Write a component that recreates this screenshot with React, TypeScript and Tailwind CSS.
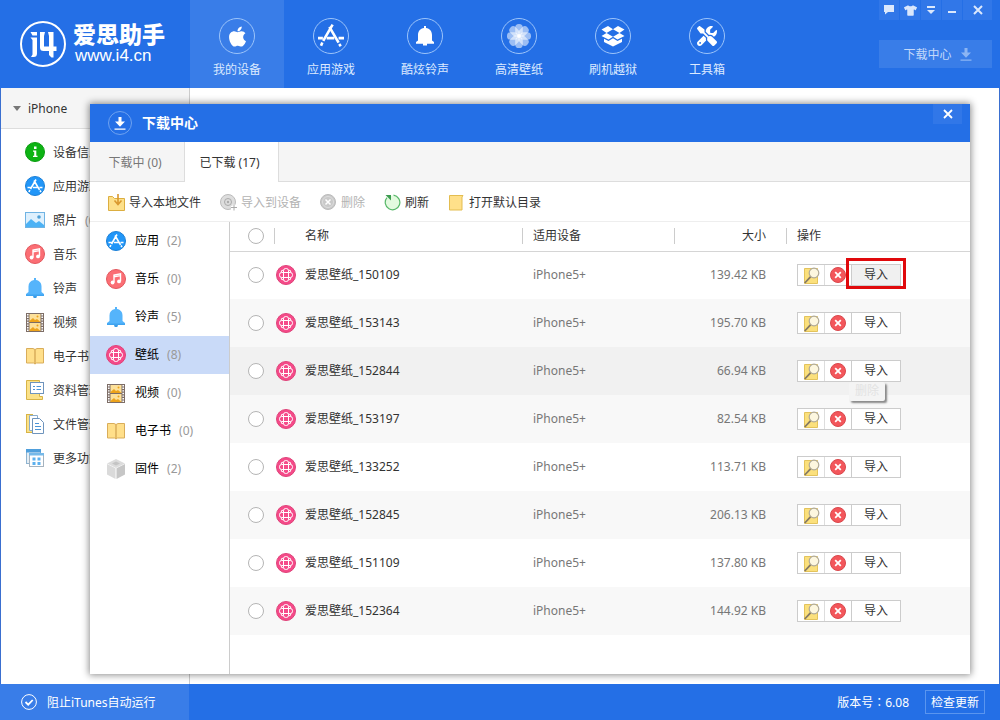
import { useState } from 'react';
import type { ReactNode } from 'react';
import { FaApple, FaTshirt } from 'react-icons/fa';
import { FaScrewdriverWrench } from 'react-icons/fa6';

const AppStoreGlyph = ({ size = 26 }: { size?: number }) => (
  <svg width={size} height={size} viewBox="0 0 24 24" fill="none" stroke="currentColor" strokeWidth="2.4">
    <path d="M13.5 1.5 4.8 16.5M4 18l-1.2 3" />
    <path d="M10.5 3.5 19 18.2M19.6 19.4l1.4 2.1" />
    <path d="M0 14h4.5M8 14h7M19 14h5" />
  </svg>
);

const BellGlyph = () => (
  <svg width="18" height="20" viewBox="0 0 18 20" fill="currentColor">
    <path d="M8 0h2v2c3.8.6 6 3.200 6 7v5.500L18 16v1.800h-7V19.500H7v-1.700H0V16l2-1.500V9c0-3.800 2.200-6.400 6-7z" />
  </svg>
);

const FlowerGlyph = () => (
  <svg width="24" height="24" viewBox="-12 -12 24 24" fill="white">
    {[0, 45, 90, 135, 180, 225, 270, 315].map((deg) => (
      <rect key={deg} x="-3.800" y="-12" width="7.600" height="11" rx="3.600" opacity="0.55" transform={`rotate(${deg})`} />
    ))}
    <circle r="2" />
  </svg>
);

const BoxGlyph = () => (
  <svg width="24" height="22" viewBox="0 0 24 22" fill="currentColor">
    <path d="M7 1l5 3.200L5.500 8 .5 4.500zM17 1l-5 3.200L18.500 8l5-3.500z" />
    <path d="M5.500 8L12 11.800 7.500 14.500.5 11zM18.500 8L12 11.800l4.500 2.700 7-3.500z" />
    <path d="M3 13.800l4.500 2.200L12 13.200l4.500 2.800 4.500-2.200V17l-9 4.500L3 17z" />
  </svg>
);

const InfoIcon = () => (
  <svg width="20" height="20" viewBox="0 0 20 20">
    <circle cx="10" cy="10" r="9.500" fill="#0db314" stroke="#0a9c10" />
    <path d="M9 4.500h2.500V7H9zM8 8.500h3.300v5.300h1.200V15H8v-1.200h1.200V9.700H8z" fill="#fff" />
  </svg>
);

const AppIcon = () => (
  <svg width="20" height="20" viewBox="0 0 20 20" fill="none">
    <circle cx="10" cy="10" r="9.500" fill="#2196f8" stroke="#1b7fd6" />
    <g stroke="#fff" strokeWidth="1.600">
      <path d="M11 3.500 5.500 13M4.800 14l-.8 2M9 4.500l5.500 9.300M15 14.500l1 1.500M2.500 11.500H6M8 11.500h4.500M14.500 11.500h3" />
    </g>
  </svg>
);

const PhotoIcon = () => (
  <svg width="20" height="16" viewBox="0 0 20 16">
    <rect x=".5" y=".5" width="19" height="15" fill="#def0fd" stroke="#6fb3e3" />
    <path d="M1 12l5-5 5 4 3-2 5 4v2H1z" fill="#4cb2f5" />
    <circle cx="14" cy="5" r="1.800" fill="#4d9fd6" />
  </svg>
);

const MusicIcon = () => (
  <svg width="20" height="20" viewBox="0 0 20 20">
    <circle cx="10" cy="10" r="9.500" fill="#fb6e74" stroke="#e2575d" />
    <path d="M8 13.500V6l6.500-1.200v7.500M8 7.800l6.500-1.200" fill="none" stroke="#fff" strokeWidth="1.400" />
    <circle cx="6.600" cy="13.500" r="1.900" fill="#fff" />
    <circle cx="13" cy="12.400" r="1.900" fill="#fff" />
  </svg>
);

const BellIcon = () => (
  <svg width="20" height="20" viewBox="0 0 20 20">
    <path d="M9 0h2v2c3.500.6 5.500 3 5.500 6.500V14l2.500 2v2H1v-2l2.500-2V8.500C3.500 5 5.500 2.600 9 2z" fill="#55b4fb" />
    <path d="M8 18h4l-.7 2H8.700z" fill="#3a9be6" />
    <path d="M1 16.500h18V18H1z" fill="#3fa4f0" />
  </svg>
);

const VideoIcon = () => (
  <svg width="18" height="19" viewBox="0 0 18 19">
    <rect width="18" height="19" fill="#7d6d66" />
    <path d="M1.800 1v17M16.200 1v17" stroke="#fff" strokeWidth="1.600" strokeDasharray="1.400 1.200" />
    <rect x="3.500" y="1" width="11" height="8" fill="#fde19a" />
    <rect x="3.500" y="10" width="11" height="8" fill="#fde19a" />
    <path d="M3.500 8l3.500-3 2 2 2-1 3.500 3h-11zM3.500 17l3.500-3 2 2 2-1 3.500 3h-11z" fill="#eda31b" />
    <circle cx="11.500" cy="3.500" r="1" fill="#eda31b" />
    <circle cx="11.500" cy="12.500" r="1" fill="#eda31b" />
  </svg>
);

const BookIcon = () => (
  <svg width="18" height="18" viewBox="0 0 18 18" fill="#ffdf8a" stroke="#d9ad5a">
    <path d="M.5 1.500H7L9 2.500V17l-1.500-1h-7zM17.500 1.500H11L9 2.500V17l1.500-1h7z" />
  </svg>
);

const DataIcon = () => (
  <svg width="18" height="20" viewBox="0 0 18 20">
    <path d="M.5.5h13v16h3v3H.5z" fill="#fbe188" stroke="#d8b446" />
    <rect x="4.500" y="2.500" width="13" height="11" fill="#fff" stroke="#6e94bd" />
    <path d="M7 6.500h2M7 9.500h2M10.500 6.500H15M10.500 9.500H15" stroke="#4b93d6" />
  </svg>
);

const FilesIcon = () => (
  <svg width="18" height="20" viewBox="0 0 18 20">
    <rect x=".5" y=".5" width="6" height="18" fill="#fbe188" stroke="#d8b446" />
    <path d="M3.500 1.500h8v15h-8z" fill="#fff" stroke="#8badcc" />
    <path d="M6.500 4.500h7l4 4v11h-11z" fill="#fff" stroke="#6e94bd" />
    <path d="M9 9.500h4M9 12.500h6M9 15.500h6" stroke="#4b93d6" />
  </svg>
);

const MoreIcon = () => (
  <svg width="18" height="18" viewBox="0 0 18 18">
    <rect x=".5" y=".5" width="14" height="14" fill="#e5eef5" stroke="#8fb4d0" />
    <path d="M0 0h15v3.500H0z" fill="#4f9fdc" />
    <rect x="3.500" y="4.500" width="14" height="13" fill="#fff" stroke="#a5b3bf" />
    <path d="M3 4h15v2.500H3z" fill="#75b9e9" />
    <path d="M6.500 8.500h3v3h-3zM11.500 8.500h3v3h-3zM6.500 13h3v3h-3zM11.500 13h3v3h-3z" fill="#5cb0ee" />
  </svg>
);

const WallpaperIcon = () => (
  <svg width="20" height="20" viewBox="0 0 20 20">
    <circle cx="10" cy="10" r="9.500" fill="#f54a89" stroke="#de4379" />
    <g fill="none" stroke="#fff" strokeWidth="1">
      <rect x="7.500" y="3.500" width="5" height="13" rx="2.200" />
      <rect x="3.500" y="7.500" width="13" height="5" rx="2.200" />
      <path d="M7.500 5.200Q4.800 4.800 5.200 7.500M12.500 5.200q2.700-.4 2.300 2.300M7.500 14.800q-2.700.4-2.300-2.300M12.500 14.800q2.700.4 2.300-2.300" />
    </g>
  </svg>
);

const FirmwareIcon = () => (
  <svg width="18" height="20" viewBox="0 0 18 20">
    <path d="M9 0l9 4.500L9 9 0 4.500z" fill="#dcdcdc" />
    <path d="M0 5l8.500 4.300V20L0 15.500z" fill="#dadada" />
    <path d="M18 5L9.500 9.300V20l8.500-4.500z" fill="#c6c6c6" />
    <path d="M9 2.500l4 2-4 2-4-2z" fill="#c4c4c4" />
  </svg>
);

const DownloadGlyph = () => (
  <svg width="12" height="13" viewBox="0 0 12 13" fill="currentColor">
    <path d="M4.500 0h3v4.500H11L6 9.800 1 4.500h3.500zM.5 11.500h11v1.300H.5z" />
  </svg>
);

const navItems = [
  { label: '我的设备', icon: <FaApple size={23} /> },
  { label: '应用游戏', icon: <AppStoreGlyph /> },
  { label: '酷炫铃声', icon: <BellGlyph /> },
  { label: '高清壁纸', icon: <FlowerGlyph /> },
  { label: '刷机越狱', icon: <BoxGlyph /> },
  { label: '工具箱', icon: <FaScrewdriverWrench size={20} /> },
];

const deviceItems = [
  { label: '设备信息', icon: <InfoIcon /> },
  { label: '应用游戏', icon: <AppIcon /> },
  { label: '照片', count: 0, icon: <PhotoIcon /> },
  { label: '音乐', icon: <MusicIcon /> },
  { label: '铃声', icon: <BellIcon /> },
  { label: '视频', icon: <VideoIcon /> },
  { label: '电子书', icon: <BookIcon /> },
  { label: '资料管理', icon: <DataIcon /> },
  { label: '文件管理', icon: <FilesIcon /> },
  { label: '更多功能', icon: <MoreIcon /> },
];

const categories = [
  { label: '应用', count: 2, icon: <AppIcon /> },
  { label: '音乐', count: 0, icon: <MusicIcon /> },
  { label: '铃声', count: 5, icon: <BellIcon /> },
  { label: '壁纸', count: 8, icon: <WallpaperIcon /> },
  { label: '视频', count: 0, icon: <VideoIcon /> },
  { label: '电子书', count: 0, icon: <BookIcon /> },
  { label: '固件', count: 2, icon: <FirmwareIcon /> },
];

const files = [
  { name: '爱思壁纸_150109', size: '139.42 KB' },
  { name: '爱思壁纸_153143', size: '195.70 KB' },
  { name: '爱思壁纸_152844', size: '66.94 KB' },
  { name: '爱思壁纸_153197', size: '82.54 KB' },
  { name: '爱思壁纸_133252', size: '113.71 KB' },
  { name: '爱思壁纸_152845', size: '206.13 KB' },
  { name: '爱思壁纸_151109', size: '137.80 KB' },
  { name: '爱思壁纸_152364', size: '144.92 KB' },
];

function Header() {
  return (
    <header className="flex h-[88px] shrink-0 bg-[#246fe6] text-white">
      <div className="flex w-[190px] shrink-0 items-center gap-[7px] pl-5">
        <svg width="46" height="46" viewBox="0 0 46 46" fill="#fff">
          <circle cx="23" cy="23" r="22" fill="none" stroke="#fff" strokeWidth="2" />
          <path d="M10.500 11H17v3.500h-4.500zM10.500 16.500H17v16q0 3.500-3.500 3.500H11l1.500-2.500V19z" />
          <path d="M20 11h5l-1 4v10.500h5V15l-1-4h5.500v14.500h3V30h-3v6.500h-2L29 34v-4h-5.500Q20 30 20 26.500z" />
        </svg>
        <div>
          <div className="text-[23px] leading-6 font-black">爱思助手</div>
          <div className="pl-0.5 font-['Liberation_Sans',sans-serif] text-[17px] leading-5">www.i4.cn</div>
        </div>
      </div>
      <nav className="flex flex-1">
        {navItems.map((item, i) => (
          <a
            key={item.label}
            href="#"
            className={`flex w-[94px] flex-col items-center pt-[18px] text-[#dceaff] ${i === 0 ? 'bg-[#397de8]' : ''}`}
          >
            <span className="flex size-9 items-center justify-center rounded-full border border-[#9cc4fa] text-white">
              {item.icon}
            </span>
            <span className="mt-[7px] leading-[18px]">{item.label}</span>
          </a>
        ))}
      </nav>
      <div className="mr-2 flex w-[113px] flex-col gap-5">
        <div className="flex h-5 gap-px text-[#dbe8fc]">
          <WindowButton label="反馈">
            <path d="M1 1h10v7H5l-3 2.500V8H1z" fill="currentColor" />
          </WindowButton>
          <button aria-label="皮肤" className="flex w-5 items-center justify-center bg-[#3177e8]">
            <FaTshirt size={13} />
          </button>
          <WindowButton label="菜单">
            <path d="M2 2h8v2H2zM2 6h8l-4 4z" fill="currentColor" />
          </WindowButton>
          <WindowButton label="最小化">
            <path d="M2 7h8v2H2z" fill="currentColor" />
          </WindowButton>
          <WindowButton label="关闭" wide>
            <path d="M2 2l8 8M10 2l-8 8" stroke="currentColor" strokeWidth="2" />
          </WindowButton>
        </div>
        <button className="flex h-7 items-center justify-center gap-2 bg-[#397de8] pt-px pl-1 text-[#c3d9fa]">
          下载中心
          <span className="text-[#8cb5f3]">
            <DownloadGlyph />
          </span>
        </button>
      </div>
    </header>
  );
}

function WindowButton({ label, wide, children }: { label: string; wide?: boolean; children: ReactNode }) {
  return (
    <button
      aria-label={label}
      className={`flex items-center justify-center bg-[#3177e8] ${wide ? 'flex-1' : 'w-5'}`}
    >
      <svg width="12" height="12" viewBox="0 0 12 12">{children}</svg>
    </button>
  );
}

function DeviceSidebar() {
  return (
    <aside className="w-[189px] shrink-0 border-r border-[#ccc]">
      <button className="flex h-[41px] w-full items-center gap-[7px] border-b border-[#ddd] bg-[#f5f5f5] pl-3 text-[#333]">
        <svg width="8" height="5" viewBox="0 0 8 5" fill="#777">
          <path d="M0 0h8L4 5z" />
        </svg>
        <span className="pt-px">iPhone</span>
      </button>
      <ul className="pt-1.5">
        {deviceItems.map((item) => (
          <li key={item.label}>
            <a href="#" className="flex h-[34px] items-center gap-2 pl-6 text-[#333]">
              <span className="flex w-5 justify-center">{item.icon}</span>
              <span className="pt-0.5">{item.label}</span>
              {item.count !== undefined && <span className="pt-0.5 text-[#999]">({item.count})</span>}
            </a>
          </li>
        ))}
      </ul>
    </aside>
  );
}

function Toolbar() {
  return (
    <div className="flex h-10 shrink-0 items-center gap-[19px] border-b border-[#eee] pt-0.5 pl-[18px] text-[#333]">
      <button className="flex items-center gap-1">
        <svg width="17" height="17" viewBox="0 0 17 17">
          <path d="M.5 2.500h4l2 2h10v12H.5z" fill="#fde08a" stroke="#dcae40" />
          <path d="M10 0v9M6.500 6.500l3.500 4 3.500-4" fill="none" stroke="#d9982e" strokeWidth="1.600" />
        </svg>
        导入本地文件
      </button>
      <button disabled className="flex items-center gap-1 text-[#b3b3b3]">
        <svg width="17" height="17" viewBox="0 0 17 17" fill="none">
          <circle cx="8" cy="8" r="7.500" fill="#ddd" stroke="#bbb" />
          <circle cx="8" cy="8" r="3.500" stroke="#aaa" />
          <circle cx="8" cy="8" r="1.200" fill="#aaa" />
          <path d="M11 13.500h6M14 10.500v6" stroke="#fff" strokeWidth="3" />
          <path d="M11 13.500h6M14 10.500v6" stroke="#aaa" />
        </svg>
        导入到设备
      </button>
      <button disabled className="flex items-center gap-1 text-[#b3b3b3]">
        <svg width="17" height="17" viewBox="0 0 17 17" fill="none">
          <circle cx="8" cy="8" r="7.500" fill="#c9c9c9" stroke="#bbb" />
          <circle cx="8" cy="8" r="5.500" stroke="#ddd" />
          <path d="M5.500 5.500l5 5M10.500 5.500l-5 5" stroke="#fff" strokeWidth="1.500" />
        </svg>
        删除
      </button>
      <button className="flex items-center gap-1">
        <svg width="17" height="17" viewBox="0 0 17 17" fill="none">
          <circle cx="8.500" cy="8.500" r="7" fill="#e3fadf" />
          <path d="M9.500 1.200A7.300 7.300 0 1 1 3 3.700" stroke="#57b868" strokeWidth="1.200" />
          <path d="M1.500 1H7v5.500z" fill="#3d9c50" />
        </svg>
        刷新
      </button>
      <button className="flex items-center gap-1">
        <svg width="17" height="17" viewBox="0 0 17 17">
          <path d="M1.500 1.500H15l-1 1.500v13H1.500z" fill="#ffe08a" stroke="#e3bd50" />
        </svg>
        打开默认目录
      </button>
    </div>
  );
}

function Categories() {
  return (
    <ul className="w-[140px] shrink-0 border-r border-[#ccc]">
      {categories.map((item) => (
        <li key={item.label}>
          <a
            href="#"
            className={`flex h-[38px] items-center gap-2 pl-4 text-black ${item.label === '壁纸' ? 'bg-[#c9daf8]' : ''}`}
          >
            <span className="mr-px flex w-5 justify-center">{item.icon}</span>
            {item.label}
            <span className="text-[#999]">({item.count})</span>
          </a>
        </li>
      ))}
    </ul>
  );
}

const checkboxClass =
  'block size-4 appearance-none rounded-full border border-[#b5b5b5] bg-white checked:bg-[#246fe6]';

function FileRow({ index, name, size }: { index: number; name: string; size: string }) {
  const hovered = index === 2;
  const highlighted = index === 0;
  return (
    <tr className={`h-12 ${hovered ? 'bg-[#f1f1f1]' : index % 2 ? 'bg-[#f8f8f8]' : 'bg-white'}`}>
      <td className="pl-[18px]">
        <input type="checkbox" aria-label={name} className={checkboxClass} />
      </td>
      <td>
        <div className="flex items-center gap-[9px] pl-px text-[#333]">
          <WallpaperIcon />
          {name}
        </div>
      </td>
      <td className="pl-2.5 text-[#777]">iPhone5+</td>
      <td className="pr-[21px] text-right text-[#777]">{size}</td>
      <td className="pl-2.5">
        <div className="relative flex h-[22px] w-[104px] border border-[#ccc] bg-white">
          <button aria-label="查看" className="flex w-[27px] items-center justify-center border-r border-[#ddd]">
            <svg width="17" height="17" viewBox="0 0 17 17">
              <path d="M1.500 1.500h13v15h-13z" fill="#fbe07c" stroke="#e3c35c" />
              <circle cx="11" cy="6" r="4.800" fill="#fdf7df" stroke="#b0aa98" strokeWidth="1.200" />
              <path d="M7.500 9.800L1.700 16" stroke="#857964" strokeWidth="1.800" />
            </svg>
          </button>
          <button aria-label="删除" className="flex w-[27px] items-center justify-center border-r border-[#ccc]">
            <svg width="16" height="16" viewBox="0 0 16 16">
              <circle cx="8" cy="8" r="7.500" fill="#f3565b" stroke="#d9484c" />
              <path d="M5.200 5.200l5.600 5.600M10.800 5.200l-5.600 5.600" stroke="#fff" strokeWidth="1.800" />
            </svg>
          </button>
          <button className={`flex-1 text-[#333] ${highlighted ? 'bg-[#f0f0f0]' : ''}`}>导入</button>
          {highlighted && (
            <span className="pointer-events-none absolute -top-[7px] -right-1.5 h-[31px] w-[60px] border-3 border-[#e0090c]" />
          )}
          {hovered && (
            <span
              role="tooltip"
              className="absolute top-[21px] right-[15px] z-10 h-[19px] w-9 rounded-xs bg-[#f4f4f4] text-center leading-[18px] text-[#e2e2e2] shadow-[2px_2px_2px_#888]"
            >
              删除
            </span>
          )}
        </div>
      </td>
    </tr>
  );
}

function FileTable() {
  return (
    <div className="flex-1">
      <table className="w-full table-fixed border-collapse text-left">
        <thead>
          <tr className="h-[29px] border-b border-[#d5d5d5] text-[#333]">
            <th className="w-[45px] p-0 font-normal">
              <div className="flex h-4 items-center border-r border-[#ccc] pl-[18px]">
                <input type="checkbox" aria-label="全选" className={checkboxClass} />
              </div>
            </th>
            <th className="p-0 font-normal">
              <div className="h-4 border-r border-[#ccc] pl-[30px] leading-4">名称</div>
            </th>
            <th className="w-[152px] p-0 font-normal">
              <div className="h-4 border-r border-[#ccc] pl-2.5 leading-4">适用设备</div>
            </th>
            <th className="w-[112px] p-0 font-normal">
              <div className="h-4 border-r border-[#ccc] pr-5 text-right leading-4">大小</div>
            </th>
            <th className="w-[183px] p-0 pl-2.5 font-normal">操作</th>
          </tr>
        </thead>
        <tbody>
          {files.map((file, i) => (
            <FileRow key={file.name} index={i} name={file.name} size={file.size} />
          ))}
        </tbody>
      </table>
    </div>
  );
}

function DownloadCenter() {
  const [tab, setTab] = useState<'downloading' | 'downloaded'>('downloaded');

  return (
    <section
      role="dialog"
      aria-label="下载中心"
      className="absolute top-4 right-[29px] bottom-2.5 left-[89px] flex flex-col bg-white shadow-[0_0_7px_1px_rgba(0,0,0,0.45)]"
    >
      <div className="flex h-[38px] shrink-0 items-center bg-[#246fe6] pl-[18px] text-white">
        <span className="flex size-6 items-center justify-center rounded-full border border-[#6fa2f0]">
          <DownloadGlyph />
        </span>
        <h2 className="ml-2.5 flex-1 text-sm font-bold">下载中心</h2>
        <button aria-label="关闭" className="mr-2 mb-[18px] flex h-5 w-[29px] items-center justify-center bg-[#3177e8]">
          <svg width="10" height="10" viewBox="0 0 10 10" stroke="#fff" strokeWidth="1.800">
            <path d="M1 1l8 8M9 1L1 9" />
          </svg>
        </button>
      </div>
      <div role="tablist" className="flex h-10 shrink-0 bg-[#f5f5f5]">
        <TabButton active={tab === 'downloading'} onClick={() => setTab('downloading')} label="下载中 (0)" />
        <TabButton active={tab === 'downloaded'} onClick={() => setTab('downloaded')} label="已下载 (17)" />
        <div className="flex-1 border-b border-[#ddd]" />
      </div>
      <Toolbar />
      <div className="flex min-h-0 flex-1">
        <Categories />
        <FileTable />
      </div>
    </section>
  );
}

function TabButton({ active, onClick, label }: { active: boolean; onClick: () => void; label: string }) {
  return (
    <button
      role="tab"
      aria-selected={active}
      onClick={onClick}
      className={
        active
          ? 'w-[95px] border-x border-[#ddd] bg-white pt-0.5 pr-1 text-[#333]'
          : 'w-[94px] border-b border-[#ddd] pt-0.5 pr-1 text-[#777]'
      }
    >
      {label}
    </button>
  );
}

function Footer() {
  return (
    <footer className="flex h-9 shrink-0 items-center bg-[#246fe6] text-white">
      <button className="flex h-full w-[189px] items-center gap-2.5 bg-[#397de8] pl-[21px]">
        <svg width="16" height="16" viewBox="0 0 16 16" fill="none" stroke="#fff">
          <circle cx="8" cy="8" r="7.400" />
          <path d="M4.500 8l2.700 2.700 4.500-4.700" strokeWidth="1.800" />
        </svg>
        <span className="pt-0.5">阻止iTunes自动运行</span>
      </button>
      <span className="ml-auto">
        版本号<span className="font-['Noto_Sans_CJK_TC',sans-serif]" lang="zh-TW">：</span>6.08
      </span>
      <button className="mr-[15px] ml-4 h-6 w-[60px] border border-[#5a95ef] pt-px">检查更新</button>
    </footer>
  );
}

function App() {
  return (
    <div className="flex min-h-screen flex-col bg-white font-['Noto_Sans','Noto_Sans_CJK_SC',sans-serif] text-xs">
      <Header />
      <main className="relative flex flex-1 border-x border-[#3a6fd0]">
        <DeviceSidebar />
        <DownloadCenter />
      </main>
      <Footer />
    </div>
  );
}

export default App;
